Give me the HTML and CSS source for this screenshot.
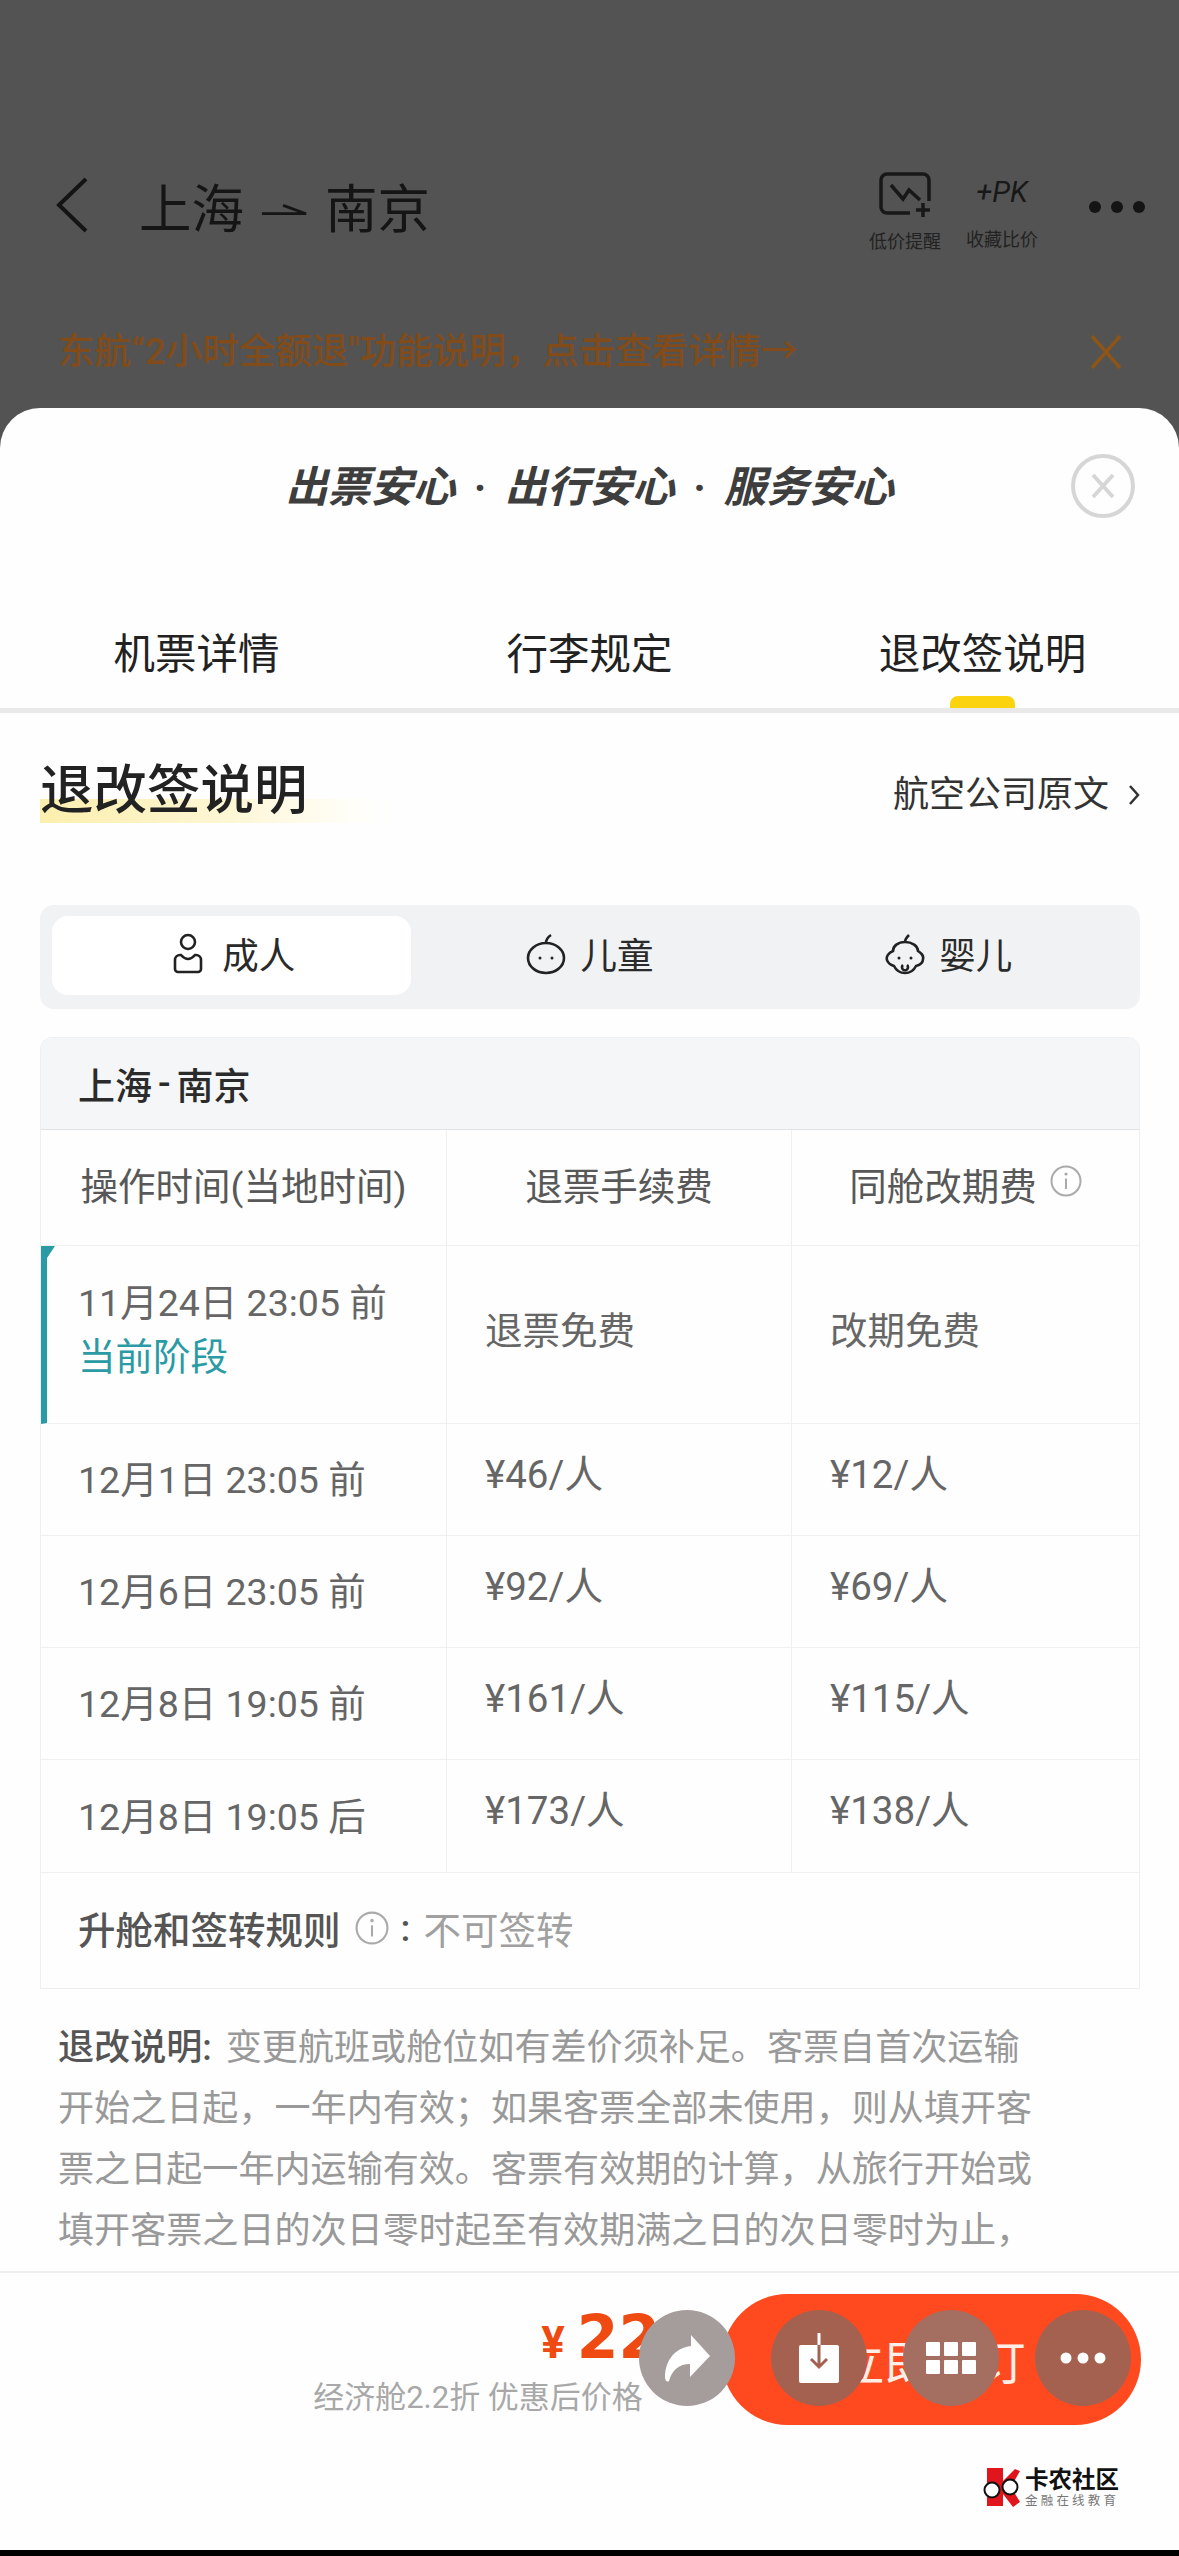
FILE: index.html
```html
<!DOCTYPE html>
<html lang="zh-CN">
<head>
<meta charset="utf-8">
<title>退改签说明</title>
<link rel="stylesheet" href="styles.css">
</head>
<body>
<div class="page">
  <div class="backdrop">
    <header class="topbar">
      <svg class="back" viewBox="0 0 32 56"><path d="M30 2 L3 28 L30 54"/></svg>
      <div class="route">
        <span>上海</span>
        <svg class="route-arrow" viewBox="0 0 50 14"><path d="M1 11 H49 L24 2"/></svg>
        <span>南京</span>
      </div>
      <div class="actions">
        <div class="action">
          <svg class="action-icon" viewBox="0 0 54 46"><path d="M31 41 H8 a6 6 0 0 1 -6 -6 V8 a6 6 0 0 1 6 -6 H44 a6 6 0 0 1 6 6 V29"/><path d="M12 13 L24 27 L30 18 L41 28"/><path d="M37 38 H51 M44 31 V45"/></svg>
          <span class="action-label">低价提醒</span>
        </div>
        <div class="action action-pk">
          <span class="pk">+PK</span>
          <span class="action-label">收藏比价</span>
        </div>
        <div class="more"><i></i><i></i><i></i></div>
      </div>
    </header>
    <div class="notice">
      <span>东航“2小时全额退"功能说明，点击查看详情→</span>
      <svg class="notice-close" viewBox="0 0 32 34"><path d="M2 1 L30 33 M30 1 L2 33"/></svg>
    </div>
  </div>

  <main class="sheet">
    <div class="sheet-head">
      <span></span>
      <h1 class="slogan">出票安心 · 出行安心 · 服务安心</h1>
      <div class="close-wrap">
        <svg class="close" viewBox="0 0 64 64"><circle cx="32" cy="32" r="30"/><path d="M22 21 L42 43 M42 21 L22 43"/></svg>
      </div>
    </div>
    <nav class="tabs">
      <div class="tab"><span>机票详情</span><i></i></div>
      <div class="tab"><span>行李规定</span><i></i></div>
      <div class="tab tab-on"><span>退改签说明</span><i></i></div>
    </nav>

    <div class="scroll">
      <div class="section-head">
        <h2 class="section-title">退改签说明</h2>
        <div class="origin">
          <span>航空公司原文</span>
          <svg class="origin-chev" viewBox="0 0 12 22"><path d="M2 2 L10 11 L2 20"/></svg>
        </div>
      </div>

      <div class="segments">
        <div class="seg seg-on">
          <svg class="seg-icon" viewBox="0 0 32 42"><circle cx="16" cy="9" r="7"/><path d="M3 36 V27 a5 5 0 0 1 5-5 h1 q7 8 14 0 h1 a5 5 0 0 1 5 5 v9 a3 3 0 0 1 -3 3 H6 a3 3 0 0 1 -3 -3z"/></svg>
          <span>成人</span>
        </div>
        <div class="seg">
          <svg class="seg-icon seg-icon-wide" viewBox="0 0 40 42"><path d="M20 10 C10 10 2 17 2 25 C2 34 11 40 20 40 C29 40 38 34 38 25 C38 17 30 10 20 10 C20 7 22 4 25 2"/><circle class="dot" cx="14" cy="25" r="1.5"/><circle class="dot" cx="26" cy="25" r="1.5"/></svg>
          <span>儿童</span>
        </div>
        <div class="seg">
          <svg class="seg-icon seg-icon-wide" viewBox="0 0 40 42"><path d="M20 9 C13 9 8 13 8 18 C3 20 1 24 2 27 C3 31 6 32 9 33 C11 37 15 40 20 40 C25 40 29 37 31 33 C35 32 38 30 38 26 C39 22 36 20 33 18 C33 13 27 9 20 9 C20 6 22 4 24 2"/><circle class="dot" cx="14" cy="25" r="1.5"/><circle class="dot" cx="26" cy="25" r="1.5"/><path d="M18 32 a3 3 0 1 0 4 0"/></svg>
          <span>婴儿</span>
        </div>
      </div>

      <section class="fare">
        <div class="fare-route">上海<span class="dash">-</span>南京</div>
        <div class="fare-grid">
          <div class="cell cell-head">操作时间(当地时间)</div>
          <div class="cell cell-head">退票手续费</div>
          <div class="cell cell-head">同舱改期费
            <svg class="info" viewBox="0 0 32 32"><circle cx="16" cy="16" r="14.5"/><path d="M16 13.5 V24"/><circle class="info-dot" cx="16" cy="9" r="1.6"/></svg>
          </div>

          <div class="cell cell-time cell-now">
            <span>11月24日 23:05 前</span>
            <span class="now">当前阶段</span>
          </div>
          <div class="cell cell-free">退票免费</div>
          <div class="cell cell-free">改期免费</div>

          <div class="cell cell-time">12月1日 23:05 前</div>
          <div class="cell cell-fee">¥46/人</div>
          <div class="cell cell-fee">¥12/人</div>

          <div class="cell cell-time">12月6日 23:05 前</div>
          <div class="cell cell-fee">¥92/人</div>
          <div class="cell cell-fee">¥69/人</div>

          <div class="cell cell-time">12月8日 19:05 前</div>
          <div class="cell cell-fee">¥161/人</div>
          <div class="cell cell-fee">¥115/人</div>

          <div class="cell cell-time">12月8日 19:05 后</div>
          <div class="cell cell-fee">¥173/人</div>
          <div class="cell cell-fee">¥138/人</div>
        </div>
        <div class="fare-rule">
          <strong>升舱和签转规则</strong>
          <svg class="info info-rule" viewBox="0 0 32 32"><circle cx="16" cy="16" r="14.5"/><path d="M16 13.5 V24"/><circle class="info-dot" cx="16" cy="9" r="1.6"/></svg>
          <strong class="colon">:</strong>
          <span>不可签转</span>
        </div>
      </section>

      <p class="terms"><strong>退改说明:</strong> 变更航班或舱位如有差价须补足。客票自首次运输<br>开始之日起，一年内有效；如果客票全部未使用，则从填开客<br>票之日起一年内运输有效。客票有效期的计算，从旅行开始或<br>填开客票之日的次日零时起至有效期满之日的次日零时为止，</p>
    </div>

    <footer class="footer">
      <div class="price-box">
        <div class="price"><span class="yen">¥</span><span class="amount">222</span></div>
        <div class="price-note">经济舱2.2折 优惠后价格</div>
      </div>
      <button class="book">立即预订</button>
    </footer>
  </main>
  <div class="homebar"></div>

  <div class="dock">
    <div class="fab fab-share">
      <svg viewBox="0 0 96 96"><path class="w" d="M52 25 L71 46 L51 67 V54 C40 54 33 60 30 71 Q27 73 26 68 C26 50 36 38 52 36 Z"/></svg>
    </div>
    <div class="fab fab-save">
      <svg viewBox="0 0 96 96"><rect class="w" x="28" y="35" width="40" height="38" rx="2"/><path class="ws" d="M48 23 V36"/><path class="bs" d="M48 35 V56 M40 49 L48 57 L56 49"/></svg>
    </div>
    <div class="fab fab-apps">
      <svg viewBox="0 0 96 96"><g class="w"><rect x="23" y="32" width="14" height="14" rx="1"/><rect x="41" y="32" width="14" height="14" rx="1"/><rect x="59" y="32" width="14" height="14" rx="1"/><rect x="23" y="50" width="14" height="14" rx="1"/><rect x="41" y="50" width="14" height="14" rx="1"/><rect x="59" y="50" width="14" height="14" rx="1"/></g></svg>
    </div>
    <div class="fab fab-more">
      <svg viewBox="0 0 96 96"><g class="w"><circle cx="31" cy="48" r="5.5"/><circle cx="48" cy="48" r="5.5"/><circle cx="65" cy="48" r="5.5"/></g></svg>
    </div>
  </div>

  <div class="mark">
    <svg class="mark-logo" viewBox="0 0 41 41">
      <path fill="#e0161c" d="M6 1 H22 V14 L34 2 L39 4 L30 20 L39 35 L32 40 L22 27 V39 H6 Z"/>
      <circle cx="11" cy="23" r="7.5" fill="#fff" stroke="#111" stroke-width="2"/>
      <circle cx="29" cy="20" r="7.5" fill="#fff" stroke="#111" stroke-width="2"/>
    </svg>
    <div class="mark-text">
      <span class="mark-name">卡农社区</span>
      <span class="mark-sub">金融在线教育</span>
    </div>
  </div>
</div>
</body>
</html>
```
FILE: styles.css
```css
* { box-sizing: border-box; }
html, body { margin: 0; padding: 0; }
body {
  width: 1179px;
  height: 2556px;
  overflow: hidden;
  font-family: "Roboto", "Noto Sans CJK SC", sans-serif;
  background: #000;
}
h1, h2, p { margin: 0; font-weight: inherit; font-size: inherit; }
svg { display: block; fill: none; }

.page {
  position: relative;
  width: 1179px;
  height: 2556px;
  display: flex;
  flex-direction: column;
  background: #535353;
}

/* dimmed page behind the sheet */
.backdrop { height: 408px; flex: none; padding-top: 172px; }
.topbar { display: flex; align-items: flex-start; padding: 0 34px 0 56px; height: 81px; }
.back { width: 32px; height: 56px; margin-top: 5px; stroke: #141414; stroke-width: 4; }
.route {
  display: flex;
  align-items: center;
  margin: 10px 0 0 51px;
  font-size: 52.5px;
  line-height: 56px;
  color: #151515;
}
.route-arrow { width: 46px; height: 14px; margin: 0 18px 0 17px; stroke: #151515; stroke-width: 3; }
.actions { margin-left: auto; display: flex; align-items: flex-start; }
.action { display: flex; flex-direction: column; align-items: center; width: 72px; }
.action-pk { margin-left: 25px; }
.action-icon { width: 54px; height: 46px; stroke: #181818; stroke-width: 3.5; margin-bottom: 13px; margin-left: 2px; }
.action-label { font-size: 18px; line-height: 22px; color: #222; white-space: nowrap; }
.pk {
  font-size: 29px;
  line-height: 40px;
  height: 40px;
  margin-bottom: 17px;
  font-style: italic;
  color: #181818;
}
.more { display: flex; gap: 10px; margin: 29px 0 0 51px; }
.more i { width: 12px; height: 12px; border-radius: 50%; background: #141414; }

.notice {
  display: flex;
  align-items: center;
  justify-content: space-between;
  margin-top: 77px;
  padding: 0 57px 0 58px;
  height: 44px;
  font-size: 36.5px;
  font-weight: 500;
  line-height: 44px;
  color: #824c1a;
  white-space: nowrap;
}
.notice-close { width: 32px; height: 34px; stroke: #8d5516; stroke-width: 3.5; }

/* bottom sheet */
.sheet {
  flex: 1;
  min-height: 0;
  display: flex;
  flex-direction: column;
  background: #fefefe;
  border-radius: 40px 40px 0 0;
  overflow: hidden;
}
.sheet-head {
  flex: none;
  height: 156px;
  display: grid;
  grid-template-columns: 1fr auto 1fr;
  align-items: center;
}
.slogan {
  margin-top: 4px;
  font-size: 42.5px;
  font-weight: 700;
  font-style: italic;
  color: #3e3e3e;
  line-height: 44px;
  word-spacing: 8px;
  white-space: nowrap;
}
.close-wrap { display: flex; justify-content: flex-end; padding-right: 44px; }
.close { width: 64px; height: 64px; stroke: #d6d6d6; stroke-width: 4; }

.tabs {
  flex: none;
  display: grid;
  grid-template-columns: repeat(3, 1fr);
  padding-top: 67px;
  border-bottom: 5px solid #e9e9e9;
  height: 149px;
}
.tab {
  display: flex;
  flex-direction: column;
  align-items: center;
  gap: 17px;
  font-size: 41.5px;
  line-height: 48px;
  color: #222;
}
.tab i { width: 65px; height: 12px; border-radius: 8px 8px 0 0; }
.tab-on i { background: #fbd40f; }

.scroll { flex: 1; min-height: 0; overflow: hidden; padding: 0 39px 0 40px; }
.section-head {
  height: 148px;
  padding-top: 8px;
  display: flex;
  align-items: center;
  justify-content: space-between;
}
.section-title {
  font-size: 53.5px;
  font-weight: 500;
  line-height: 64px;
  color: #222;
  width: 355px;
  background: linear-gradient(90deg, #fcefae 0, #fdf6d2 50%, #fffef8 88%, transparent 100%) left bottom / 100% 24px no-repeat;
}
.origin { display: flex; align-items: center; gap: 19px; padding-top: 8px; font-size: 36px; line-height: 44px; color: #333; }
.origin-chev { width: 12px; height: 22px; stroke: #333; stroke-width: 2.5; }

.segments {
  margin-top: 44px;
  height: 104px;
  padding: 11px 12px 14px;
  display: grid;
  grid-template-columns: repeat(3, 1fr);
  background: #f1f2f4;
  border-radius: 14px;
}
.seg {
  display: flex;
  align-items: center;
  justify-content: center;
  gap: 14px;
  padding-bottom: 4px;
  font-size: 36.5px;
  color: #2a2a2a;
  border-radius: 16px;
}
.seg-on { background: #fff; padding-left: 5px; gap: 18px; }
.seg-icon { width: 32px; height: 42px; stroke: #222; stroke-width: 2.6; }
.seg-icon-wide { width: 40px; }
.seg-icon .dot { fill: #222; stroke: none; }

.fare { margin-top: 28px; border: 1px solid #eeeff0; border-radius: 12px 12px 0 0; overflow: hidden; }
.fare-route {
  height: 92px;
  padding-left: 37px;
  display: flex;
  align-items: center;
  font-size: 37px;
  font-weight: 500;
  color: #2b2b2b;
  background: #f5f6f8;
  border-bottom: 1px solid #e1e2e4;
}
.dash { margin: 0 6px; }
.fare-grid {
  display: grid;
  grid-template-columns: 406px 345px 1fr;
  grid-template-rows: 116px 178px 112px 112px 112px 113px;
}
.cell {
  display: flex;
  align-items: center;
  padding-left: 38px;
  padding-bottom: 6px;
  font-size: 37.5px;
  color: #666;
  white-space: nowrap;
  border-bottom: 1px solid #f0f0f0;
  border-right: 1px solid #f0f0f0;
}
.cell:nth-child(3n) { border-right: 0; }
.cell-head { justify-content: center; padding-left: 0; padding-bottom: 8px; color: #585858; gap: 13px; }
.cell-time { padding-left: 37px; }
.cell-now {
  position: relative;
  flex-direction: column;
  align-items: flex-start;
  justify-content: center;
  gap: 14px;
  padding-left: 31px;
  padding-bottom: 10px;
  border-left: 6px solid #2a9aa5;
  line-height: 40px;
}
.cell-now::before {
  content: "";
  position: absolute;
  left: 0;
  top: 0;
  border-top: 12px solid #2a9aa5;
  border-right: 8px solid transparent;
}
.now { color: #2a9aa5; }
.cell-free { padding-bottom: 14px; }
.cell-fee { padding-bottom: 18px; font-size: 38.5px; }
.info { width: 32px; height: 32px; stroke: #aaa; stroke-width: 2; flex: none; margin-top: -6px; }
.info-dot { fill: #aaa; stroke: none; }

.fare-rule {
  height: 115px;
  padding-left: 37px;
  padding-bottom: 6px;
  display: flex;
  align-items: center;
  font-size: 37.5px;
  color: #a0a0a0;
}
.fare-rule strong { font-weight: 500; color: #555; }
.info-rule { margin: 0 12px 0 14px; width: 34px; height: 34px; }
.colon { margin-right: 13px; }

.terms {
  margin-top: 29px;
  padding-left: 18px;
  font-size: 36.1px;
  line-height: 61px;
  color: #999;
  white-space: nowrap;
}
.terms strong { font-weight: 500; color: #555; margin-right: 5px; }

.footer {
  flex: none;
  height: 279px;
  border-top: 2px solid #efefef;
  padding: 21px 38px 0 0;
  display: flex;
  justify-content: flex-end;
  align-items: flex-start;
  gap: 20px;
}
.price-box { display: flex; flex-direction: column; margin-top: 8px; }
.price { display: flex; align-items: baseline; padding-left: 228px; line-height: 70px; color: #ee4a12; font-weight: 700; }
.yen { font-size: 44px; margin-right: 12px; }
.amount { font-family: "DejaVu Sans", sans-serif; font-size: 60px; }
.price-note { font-size: 31px; line-height: 40px; color: #a8a8a8; white-space: nowrap; }
.book {
  width: 419px;
  height: 131px;
  border: 0;
  border-radius: 66px;
  background: #ff4a20;
  color: #ffeee8;
  font-family: inherit;
  font-size: 47px;
  padding: 0;
}

.homebar { flex: none; height: 6px; background: #000; }

/* floating screenshot toolbar */
.dock { position: absolute; left: 639px; top: 2310px; display: flex; gap: 36px; }
.fab { width: 96px; height: 96px; border-radius: 50%; }
.fab svg { width: 96px; height: 96px; }
.fab .w { fill: #fff; }
.fab .ws { stroke: #fff; stroke-width: 3; }
.fab .bs { stroke: #a46150; stroke-width: 3; }
.fab-share { background: #a59d9b; }
.fab-save { background: #a46150; }
.fab-apps { background: #a46e60; }
.fab-more { background: #a46150; }

/* watermark */
.mark { position: absolute; left: 981px; top: 2467px; display: flex; gap: 3px; }
.mark-logo { width: 41px; height: 41px; }
.mark-text { display: flex; flex-direction: column; }
.mark-name { font-size: 23.5px; line-height: 27px; font-weight: 700; color: #111; white-space: nowrap; }
.mark-sub { font-size: 12.5px; line-height: 14px; letter-spacing: 3.2px; color: #777; white-space: nowrap; }
```
